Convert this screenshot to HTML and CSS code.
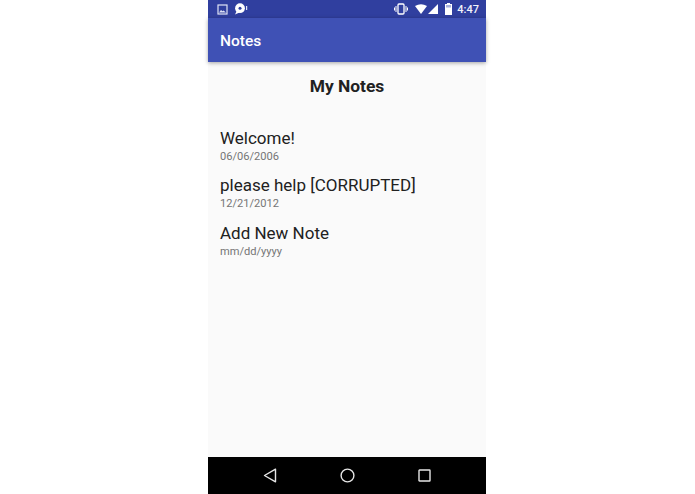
FILE: index.html
```html
<!DOCTYPE html>
<html lang="en">
<head>
  <meta charset="UTF-8"/>
  <title>Notes</title>
  <link rel="stylesheet" href="styles.css">
</head>
<body>
  <div class="phone">
    <div class="status-bar">
      <div class="status-left">
        <svg class="icon-image" width="11" height="11" viewBox="0 0 11 11">
          <rect x="1" y="1" width="9" height="9" fill="none" stroke="#dfe3f5" stroke-width="1.2"/>
          <path d="M2 8.5 L4 6 L5.5 7.3 L6.5 6.6 L9 8.5 Z" fill="#dfe3f5"/>
        </svg>
        <svg class="icon-hangouts" width="14" height="12" viewBox="0 0 14 12">
          <circle cx="6" cy="5.2" r="4.9" fill="#fff"/>
          <path d="M1 11.5 L3 7.5 L5.5 9.5 Z" fill="#fff"/>
          <circle cx="6" cy="5.2" r="1.5" fill="#303f9f"/>
          <rect x="12" y="3" width="1.2" height="4" fill="#dfe3f5"/>
        </svg>
      </div>
      <div class="status-right">
        <svg class="icon-vibrate" width="14" height="12" viewBox="0 0 14 12">
          <rect x="4" y="1" width="6" height="10" rx="1" fill="none" stroke="#fff" stroke-width="1.3"/>
          <path d="M2 3 V9 M0.5 4.5 V7.5 M12 3 V9 M13.5 4.5 V7.5" stroke="#fff" stroke-width="1"/>
        </svg>
        <svg class="icon-wifi" width="12" height="10" viewBox="0 0 12 10">
          <path d="M0 2 Q6 -1.5 12 2 L6 10 Z" fill="#fff"/>
        </svg>
        <svg class="icon-signal" width="10" height="10" viewBox="0 0 10 10">
          <path d="M0 10 L10 0 V10 Z" fill="#fff"/>
        </svg>
        <svg class="icon-battery" width="7" height="12" viewBox="0 0 7 12">
          <path d="M2 0 H5 V1 H7 V12 H0 V1 H2 Z" fill="#fff"/>
          <rect x="1" y="2" width="5" height="2.5" fill="#aab2dc"/>
        </svg>
        <span class="clock">4:47</span>
      </div>
    </div>
    <div class="app-bar">Notes</div>
    <div class="content">
      <h1>My Notes</h1>
      <div class="note">
        <div class="note-title">Welcome!</div>
        <div class="note-date">06/06/2006</div>
      </div>
      <div class="note">
        <div class="note-title">please help [CORRUPTED]</div>
        <div class="note-date">12/21/2012</div>
      </div>
      <div class="note">
        <div class="note-title">Add New Note</div>
        <div class="note-date">mm/dd/yyyy</div>
      </div>
    </div>
    <div class="nav-bar">
      <svg width="14" height="15" viewBox="0 0 14 15">
        <path d="M12.5 1.2 V13.8 L1.5 7.5 Z" fill="none" stroke="#e6e6e6" stroke-width="1.4" stroke-linejoin="round"/>
      </svg>
      <svg width="15" height="15" viewBox="0 0 15 15">
        <circle cx="7.5" cy="7.5" r="6.4" fill="none" stroke="#e6e6e6" stroke-width="1.4"/>
      </svg>
      <svg width="13" height="13" viewBox="0 0 13 13">
        <rect x="1" y="1" width="11" height="11" rx="0.5" fill="none" stroke="#e6e6e6" stroke-width="1.4"/>
      </svg>
    </div>
  </div>
</body>
</html>
```

FILE: styles.css
```css
html, body {
  margin: 0;
  padding: 0;
  height: 100%;
  background-color: #ffffff;
}

body {
  font-family: Roboto, "Liberation Sans", sans-serif;
}

.phone {
  width: 278px;
  height: 494px;
  margin-left: 208px;
  display: flex;
  flex-direction: column;
  background-color: #fafafa;
}

.status-bar {
  height: 18px;
  padding: 0 7px 0 9px;
  display: flex;
  align-items: center;
  justify-content: space-between;
  background-color: #303f9f;
}

.status-left,
.status-right {
  display: flex;
  align-items: center;
}

.icon-image {
  margin-right: 6px;
}

.icon-vibrate {
  margin-right: 7px;
}

.icon-wifi {
  margin-right: 1px;
}

.icon-signal {
  margin-right: 7px;
}

.icon-battery {
  margin-right: 5px;
}

.clock {
  font-size: 11px;
  font-weight: 500;
  color: #f2f3fa;
}

.app-bar {
  height: 44px;
  padding-left: 12px;
  line-height: 46px;
  font-size: 15.5px;
  font-weight: 500;
  color: #ffffff;
  background-color: #3f51b5;
  box-shadow: 0 1px 4px rgba(0, 0, 0, 0.35);
}

.content {
  flex: 1;
  padding: 0 12px;
}

h1 {
  margin: 14px 0 30.5px;
  font-size: 17.4px;
  line-height: 20px;
  font-weight: 700;
  text-align: center;
  color: #212121;
}

.note {
  margin-bottom: 10.5px;
}

.note-title {
  font-size: 17px;
  line-height: 22px;
  color: #212121;
}

.note-date {
  font-size: 11.1px;
  line-height: 15px;
  color: #757575;
}

.nav-bar {
  height: 37px;
  display: flex;
  align-items: center;
  justify-content: center;
  gap: 63px;
  background-color: #000000;
}
```
